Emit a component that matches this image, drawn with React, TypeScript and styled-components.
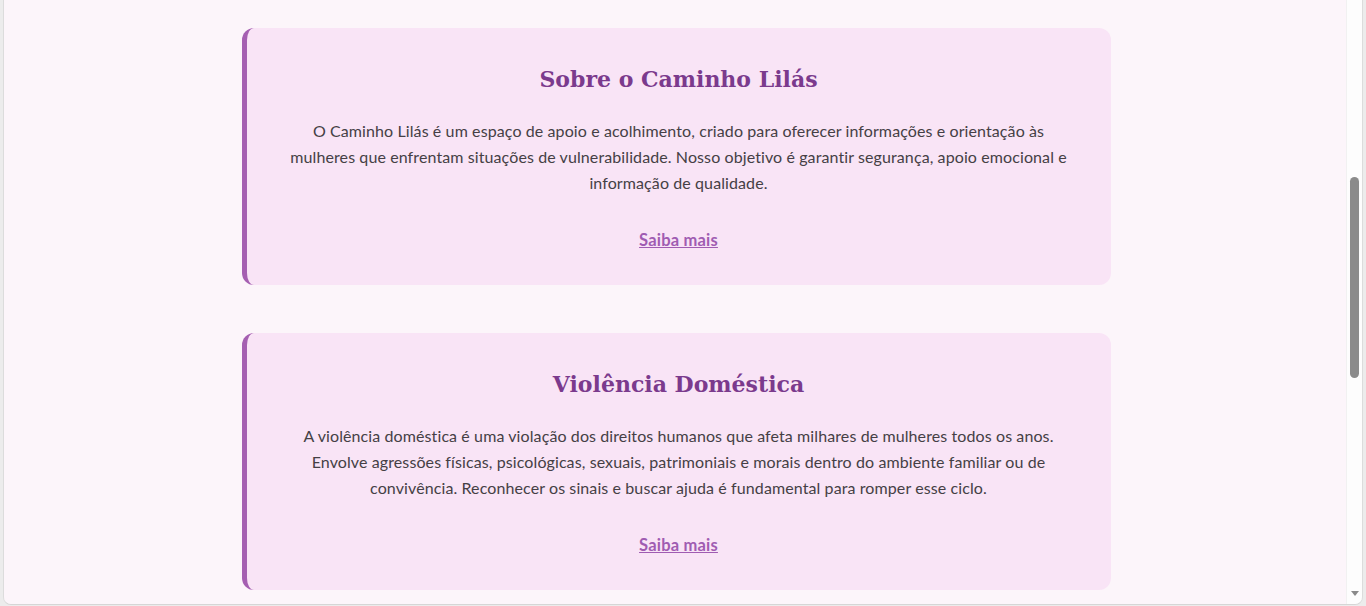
import React from "react";
import styled, { createGlobalStyle } from "styled-components";

const Global = createGlobalStyle`
  html, body { margin: 0; padding: 0; height: 100%; overflow: hidden; }
  body { background: #ececec; }
  #root { height: 100%; }
`;

const Frame = styled.div`
  display: flex;
  width: 1366px;
  height: 606px;
  box-sizing: border-box;
  padding: 0 3px 1px 3px;
  background: #ececec;
`;

const Window = styled.div`
  flex: 1;
  display: flex;
  min-width: 0;
  border-left: 1px solid #dcdcdc;
  border-right: 1px solid #dcdcdc;
  border-bottom: 1px solid #d6d6d6;
  border-radius: 0 0 8px 8px;
  overflow: hidden;
`;

const Page = styled.main`
  flex: 1;
  min-width: 0;
  background: #fcf5fa;
  overflow: hidden;
  display: flex;
  flex-direction: column;
  align-items: center;
  gap: 48px;
  padding-top: 28px;
  padding-left: 2px;
  box-sizing: border-box;
`;

const Card = styled.section`
  width: 869px;
  box-sizing: border-box;
  flex: none;
  background: #f9e4f6;
  border-left: 5px solid #a55fb1;
  border-radius: 12px;
  padding: 35px 40px 32px;
  text-align: center;
`;

const Title = styled.h2`
  margin: 0 0 23px;
  font-family: "DejaVu Serif", Georgia, "Liberation Serif", serif;
  font-weight: 700;
  font-size: 22px;
  line-height: 32px;
  color: #7b3a8d;
`;

const Text = styled.p`
  margin: 0 0 31px;
  font-family: Lato, "Liberation Sans", sans-serif;
  font-size: 16px;
  letter-spacing: 0.1px;
  line-height: 26px;
  color: #454045;
`;

const Link = styled.a`
  font-family: Lato, "Liberation Sans", sans-serif;
  font-size: 16.5px;
  letter-spacing: 0.2px;
  font-weight: 700;
  line-height: 26px;
  color: #a05cb2;
  text-decoration: underline;
  cursor: pointer;
`;

const Scrollbar = styled.div`
  width: 15px;
  flex: none;
  background: #fdfdfd;
  border-left: 1px solid #f1f1f1;
  display: flex;
  flex-direction: column;
  align-items: center;
`;

const Thumb = styled.div`
  margin-top: 177px;
  width: 9px;
  height: 201px;
  border-radius: 5px;
  background: #8b8b8b;
`;

const Arrow = styled.div`
  margin-top: auto;
  margin-bottom: 8px;
  width: 0;
  height: 0;
  border-left: 4px solid transparent;
  border-right: 4px solid transparent;
  border-top: 5px solid #8a8a8a;
`;

const sections = [
  {
    title: "Sobre o Caminho Lilás",
    text: "O Caminho Lilás é um espaço de apoio e acolhimento, criado para oferecer informações e orientação às mulheres que enfrentam situações de vulnerabilidade. Nosso objetivo é garantir segurança, apoio emocional e informação de qualidade.",
  },
  {
    title: "Violência Doméstica",
    text: "A violência doméstica é uma violação dos direitos humanos que afeta milhares de mulheres todos os anos. Envolve agressões físicas, psicológicas, sexuais, patrimoniais e morais dentro do ambiente familiar ou de convivência. Reconhecer os sinais e buscar ajuda é fundamental para romper esse ciclo.",
  },
];

export default function App() {
  return (
    <>
      <Global />
      <Frame>
        <Window>
          <Page>
            {sections.map((s) => (
              <Card key={s.title}>
                <Title>{s.title}</Title>
                <Text>{s.text}</Text>
                <Link href="#">Saiba mais</Link>
              </Card>
            ))}
          </Page>
          <Scrollbar>
            <Thumb />
            <Arrow />
          </Scrollbar>
        </Window>
      </Frame>
    </>
  );
}
